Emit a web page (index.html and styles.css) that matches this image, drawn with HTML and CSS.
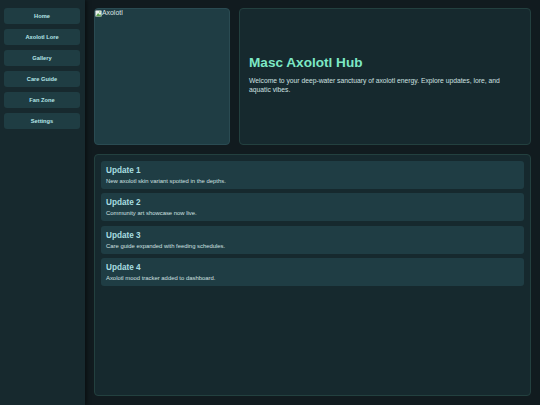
FILE: index.html
```html
<!DOCTYPE html>
<html>
<head>
<meta charset="utf-8">
<link rel="stylesheet" href="styles.css">
</head>
<body>
<div class="app">
  <nav class="sidebar">
    <button class="nav-btn">Home</button>
    <button class="nav-btn">Axolotl Lore</button>
    <button class="nav-btn">Gallery</button>
    <button class="nav-btn">Care Guide</button>
    <button class="nav-btn">Fan Zone</button>
    <button class="nav-btn">Settings</button>
  </nav>
  <main class="main">
    <div class="top-row">
      <div class="image-card">
        <span class="broken-img">
          <svg class="broken-icon" width="7" height="7" viewBox="0 0 8 8">
            <rect x="0.5" y="0.5" width="7" height="7" rx="1" fill="#e8f0ec" stroke="#9aa" stroke-width="0.6"/>
            <path d="M1 7 L3.5 3.5 L5 5.5 L6 4.5 L7 7 Z" fill="#5aa04a"/>
            <circle cx="5.5" cy="2.2" r="0.9" fill="#7bc06a"/>
          </svg>Axolotl</span>
      </div>
      <section class="hero">
        <h1 class="hero-title">Masc Axolotl Hub</h1>
        <p class="hero-text">Welcome to your deep-water sanctuary of axolotl energy. Explore updates, lore, and aquatic vibes.</p>
      </section>
    </div>
    <section class="updates">
      <div class="update">
        <h3 class="update-title">Update 1</h3>
        <p class="update-text">New axolotl skin variant spotted in the depths.</p>
      </div>
      <div class="update">
        <h3 class="update-title">Update 2</h3>
        <p class="update-text">Community art showcase now live.</p>
      </div>
      <div class="update">
        <h3 class="update-title">Update 3</h3>
        <p class="update-text">Care guide expanded with feeding schedules.</p>
      </div>
      <div class="update">
        <h3 class="update-title">Update 4</h3>
        <p class="update-text">Axolotl mood tracker added to dashboard.</p>
      </div>
    </section>
  </main>
</div>
</body>
</html>
```
FILE: styles.css
```css
* { box-sizing: border-box; }
html, body {
  margin: 0;
  padding: 0;
  width: 540px;
  height: 405px;
  background: #111b1f;
  font-family: "Liberation Sans", Arial, sans-serif;
  overflow: hidden;
}
.app {
  display: flex;
  height: 405px;
}
.sidebar {
  width: 85px;
  flex: none;
  background: #17292e;
  box-shadow: 2px 0 4px rgba(0, 0, 0, 0.45);
  padding: 8px 4px;
  display: flex;
  flex-direction: column;
  gap: 5px;
  position: relative;
  z-index: 1;
}
.nav-btn {
  height: 16px;
  width: 76px;
  border: none;
  border-radius: 3px;
  background: #1f3d43;
  color: #b5e6e8;
  font-family: "Liberation Sans", Arial, sans-serif;
  font-weight: bold;
  font-size: 5.7px;
  padding: 0;
}
.main {
  flex: 1;
  padding: 8px 9px 9px 9px;
  display: flex;
  flex-direction: column;
  gap: 9px;
}
.top-row {
  display: flex;
  gap: 9px;
  height: 137px;
  flex: none;
}
.image-card {
  width: 136px;
  flex: none;
  background: #1f3d44;
  border: 1px solid #2a4b52;
  border-radius: 4px;
  padding: 0;
}
.broken-img {
  display: flex;
  align-items: center;
  color: #dfe6e6;
  font-size: 6.9px;
  line-height: 8px;
}
.broken-icon { display: block; }
.hero {
  flex: 1;
  background: #16292e;
  border: 1px solid #23403f;
  border-radius: 4px;
  padding: 0 9px 5px 9px;
  display: flex;
  flex-direction: column;
  justify-content: center;
}
.hero-title {
  margin: 0 0 6px 0;
  color: #7de8c5;
  font-size: 13.6px;
  line-height: 17px;
  font-weight: bold;
}
.hero-text {
  margin: 0;
  color: #cfe0e0;
  font-size: 6.75px;
  line-height: 8.5px;
}
.updates {
  flex: 1;
  background: #16292e;
  border: 1px solid #23403f;
  border-radius: 4px;
  padding: 6px 6px;
  display: flex;
  flex-direction: column;
  gap: 4.3px;
}
.update {
  height: 28px;
  background: #1f3d44;
  border-radius: 3px;
  padding: 4px 5px 0 5px;
}
.update-title {
  margin: 0;
  color: #a8dde0;
  font-size: 8.2px;
  line-height: 11px;
  font-weight: bold;
}
.update-text {
  margin: 1px 0 0 0;
  color: #cfe0e0;
  font-size: 5.9px;
  line-height: 8px;
}
```
